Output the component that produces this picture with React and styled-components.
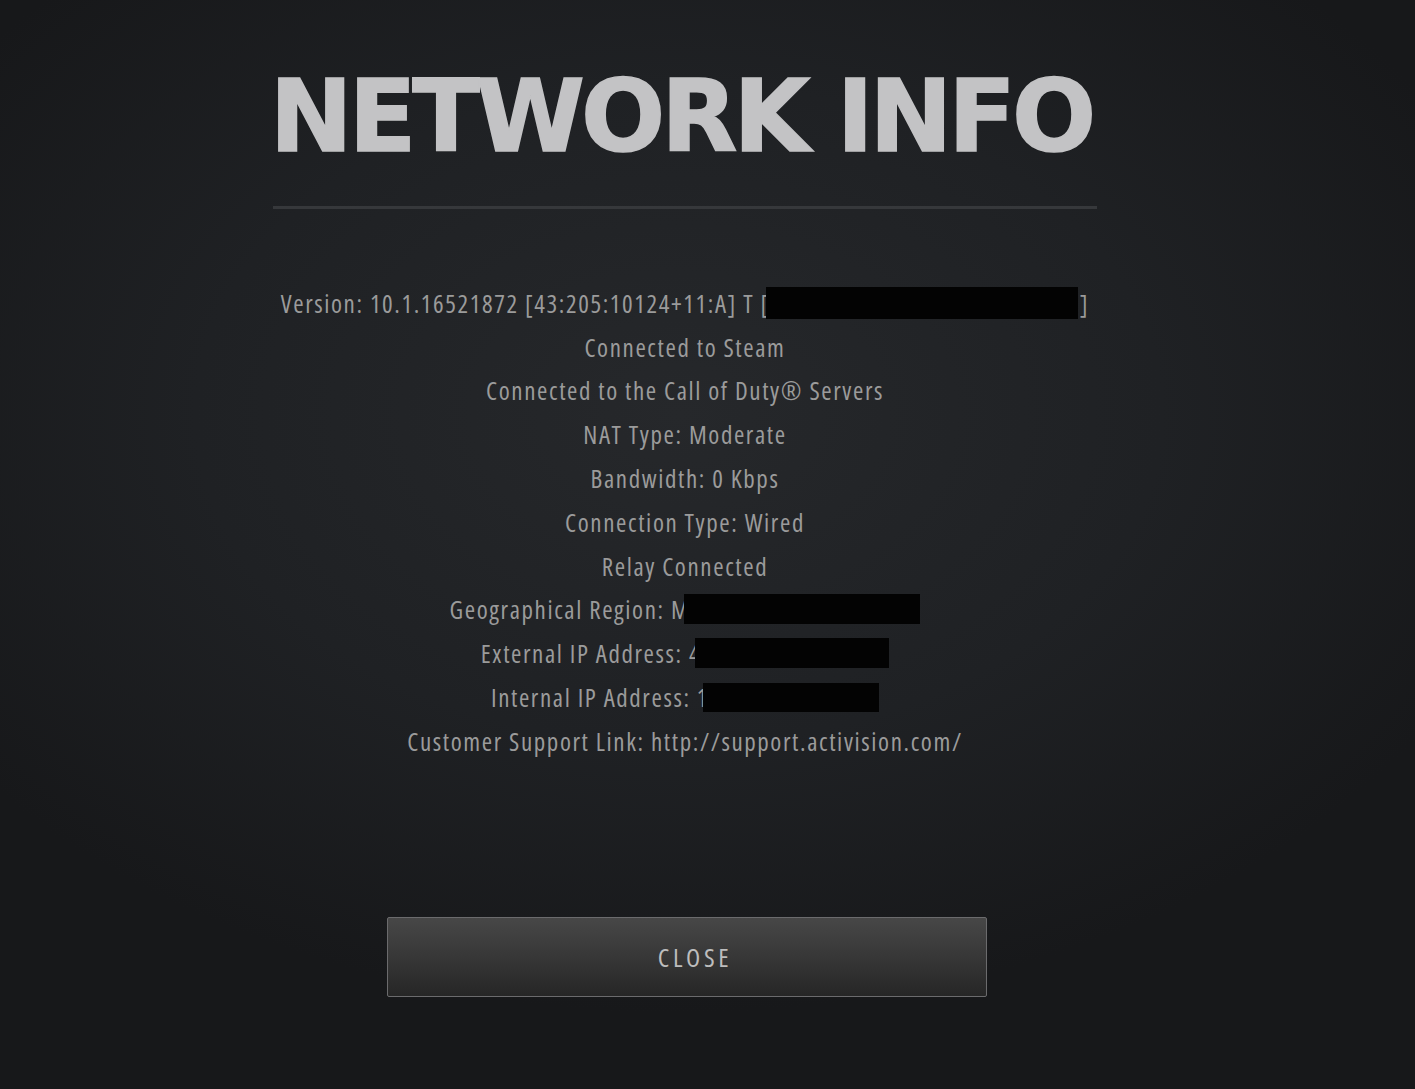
import React from "react";
import styled, { createGlobalStyle } from "styled-components";

const GlobalStyle = createGlobalStyle`
  html, body {
    margin: 0;
    padding: 0;
    background: #1b1c1f;
  }
  #root {
    min-height: 100vh;
  }
`;

const bodyFont = `"Open Sans", "DejaVu Sans", sans-serif`;

const Page = styled.div`
  width: 1415px;
  height: 1089px;
  box-sizing: border-box;
  display: flex;
  flex-direction: column;
  align-items: center;
  padding: 74px 45px 0 0;
  background:
    radial-gradient(ellipse 62% 55% at 48% 38%, #26282b 0%, #1f2124 55%, #17181a 100%);
  font-family: ${bodyFont};
  font-stretch: 75%;
  overflow: hidden;
`;

const Title = styled.h1`
  margin: 0 0 0 -8px;
  font-family: "DejaVu Sans", sans-serif;
  font-stretch: normal;
  font-weight: 700;
  font-size: 99px;
  line-height: 86px;
  letter-spacing: -4px;
  color: #c3c3c5;
  -webkit-text-stroke: 1.5px #c3c3c5;
`;

const Divider = styled.hr`
  width: 824px;
  height: 3px;
  margin: 46px 0 72px 0;
  border: 0;
  background: #36383b;
`;

const InfoList = styled.ul`
  list-style: none;
  margin: 0;
  padding: 0;
  display: flex;
  flex-direction: column;
  align-items: center;
`;

const InfoRow = styled.li`
  height: 43.8px;
  display: flex;
  align-items: center;
  font-size: 25px;
  font-weight: 500;
  letter-spacing: 1.6px;
  color: #9b9b9b;
  white-space: pre;
`;

const Redacted = styled.span`
  display: inline-block;
  width: ${p => p.$w}px;
  height: ${p => p.$h || 30}px;
  background: #030303;
  margin-left: ${p => p.$ml || 0}px;
  margin-right: ${p => p.$mr || 0}px;
`;

const CloseButton = styled.button`
  margin-top: 154px;
  margin-left: 4px;
  width: 600px;
  height: 80px;
  padding: 0 0 0 16px;
  border: 1px solid #6b6b6d;
  border-radius: 2px;
  background: linear-gradient(180deg, #474747 0%, #3c3c3c 35%, #262626 100%);
  color: #bdbdbd;
  font-family: ${bodyFont};
  font-stretch: 75%;
  font-weight: 500;
  font-size: 26px;
  letter-spacing: 3.6px;
  cursor: pointer;
`;

export default function App() {
  return (
    <>
      <GlobalStyle />
      <Page>
        <Title>NETWORK INFO</Title>
        <Divider />
        <InfoList>
          <InfoRow>
            Version: 10.1.16521872 [43:205:10124+11:A] T [
            <Redacted $w={312} $h={32} $ml={-4} $mr={2} />]
          </InfoRow>
          <InfoRow>Connected to Steam</InfoRow>
          <InfoRow>Connected to the Call of Duty® Servers</InfoRow>
          <InfoRow>NAT Type: Moderate</InfoRow>
          <InfoRow>Bandwidth: 0 Kbps</InfoRow>
          <InfoRow>Connection Type: Wired</InfoRow>
          <InfoRow>Relay Connected</InfoRow>
          <InfoRow>
            Geographical Region: M<Redacted $w={236} $h={30} $ml={-6} />
          </InfoRow>
          <InfoRow>
            External IP Address: 4<Redacted $w={194} $h={30} $ml={-6} />
          </InfoRow>
          <InfoRow>
            Internal IP Address: 1<Redacted $w={176} $h={29} $ml={-6} />
          </InfoRow>
          <InfoRow>Customer Support Link: http://support.activision.com/</InfoRow>
        </InfoList>
        <CloseButton>CLOSE</CloseButton>
      </Page>
    </>
  );
}
